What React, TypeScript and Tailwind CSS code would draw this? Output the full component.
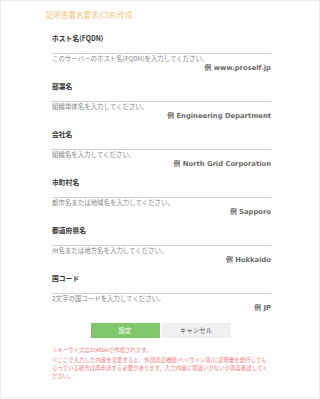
const fields = [
  {
    label: "ホスト名(FQDN)",
    help: "このサーバーのホスト名(FQDN)を入力してください。",
    example: "www.proself.jp",
  },
  {
    label: "部署名",
    help: "組織単体名を入力してください。",
    example: "Engineering Department",
  },
  {
    label: "会社名",
    help: "組織名を入力してください。",
    example: "North Grid Corporation",
  },
  {
    label: "市町村名",
    help: "都市名または地域名を入力してください。",
    example: "Sapporo",
  },
  {
    label: "都道府県名",
    help: "州名または地方名を入力してください。",
    example: "Hokkaido",
  },
  {
    label: "国コード",
    help: "2文字の国コードを入力してください。",
    example: "JP",
  },
];

const App = () => {
  return (
    <div
      className="w-[320px] h-[398px] bg-white border border-[#ececec] overflow-hidden"
      style={{ fontFamily: '"Noto Sans CJK JP", "Noto Sans", sans-serif' }}
    >
      <h2 className="pl-[45px] pt-[8px] h-[20px] text-[7.5px] leading-[12px] text-[#f3c47c]">
        証明書署名要求(CSR)作成
      </h2>

      <form className="ml-[51px] w-[219px] mt-[12px]">
        {fields.map((f) => (
          <div key={f.label} className="h-[48px]">
            <label className="block h-[10px] text-[6.8px] leading-[10px] font-bold text-[#333]">
              {f.label}
            </label>
            <input className="block w-full h-[11px] border-b border-[#d0d0d0] outline-none" />
            <p className="h-[10px] text-[6.45px] leading-[10px] text-[#888]">{f.help}</p>
            <p className="h-[8px] text-right text-[6.8px] leading-[8px] font-bold text-[#6b6b6b] font-['DejaVu_Sans','Noto_Sans_CJK_JP',sans-serif]">
              例 {f.example}
            </p>
          </div>
        ))}

        <div className="flex justify-center gap-[2px] mt-[2px] -ml-[2px]">
          <button
            type="submit"
            className="w-[69px] h-[15px] bg-[#80c76b] text-white text-[6.5px] leading-[15px]"
          >
            設定
          </button>
          <button
            type="button"
            className="w-[69px] h-[15px] bg-[#f0f0f1] text-[#555] text-[6.5px] leading-[15px]"
          >
            キャンセル
          </button>
        </div>

        <div className="mt-[8px] text-[5.43px] leading-[8px] text-[#f07b7b]">
          <p>※キーサイズは2048bitで作成されます。</p>
          <p className="mt-[2px]">
            ※ここで入力した内容を変更すると、外部認証機関(ベリサイン等)に証明書を発行してもらっている場合は再申請する必要があります。入力内容に間違いがないか再度確認してください。
          </p>
        </div>
      </form>
    </div>
  );
};

export default App;
